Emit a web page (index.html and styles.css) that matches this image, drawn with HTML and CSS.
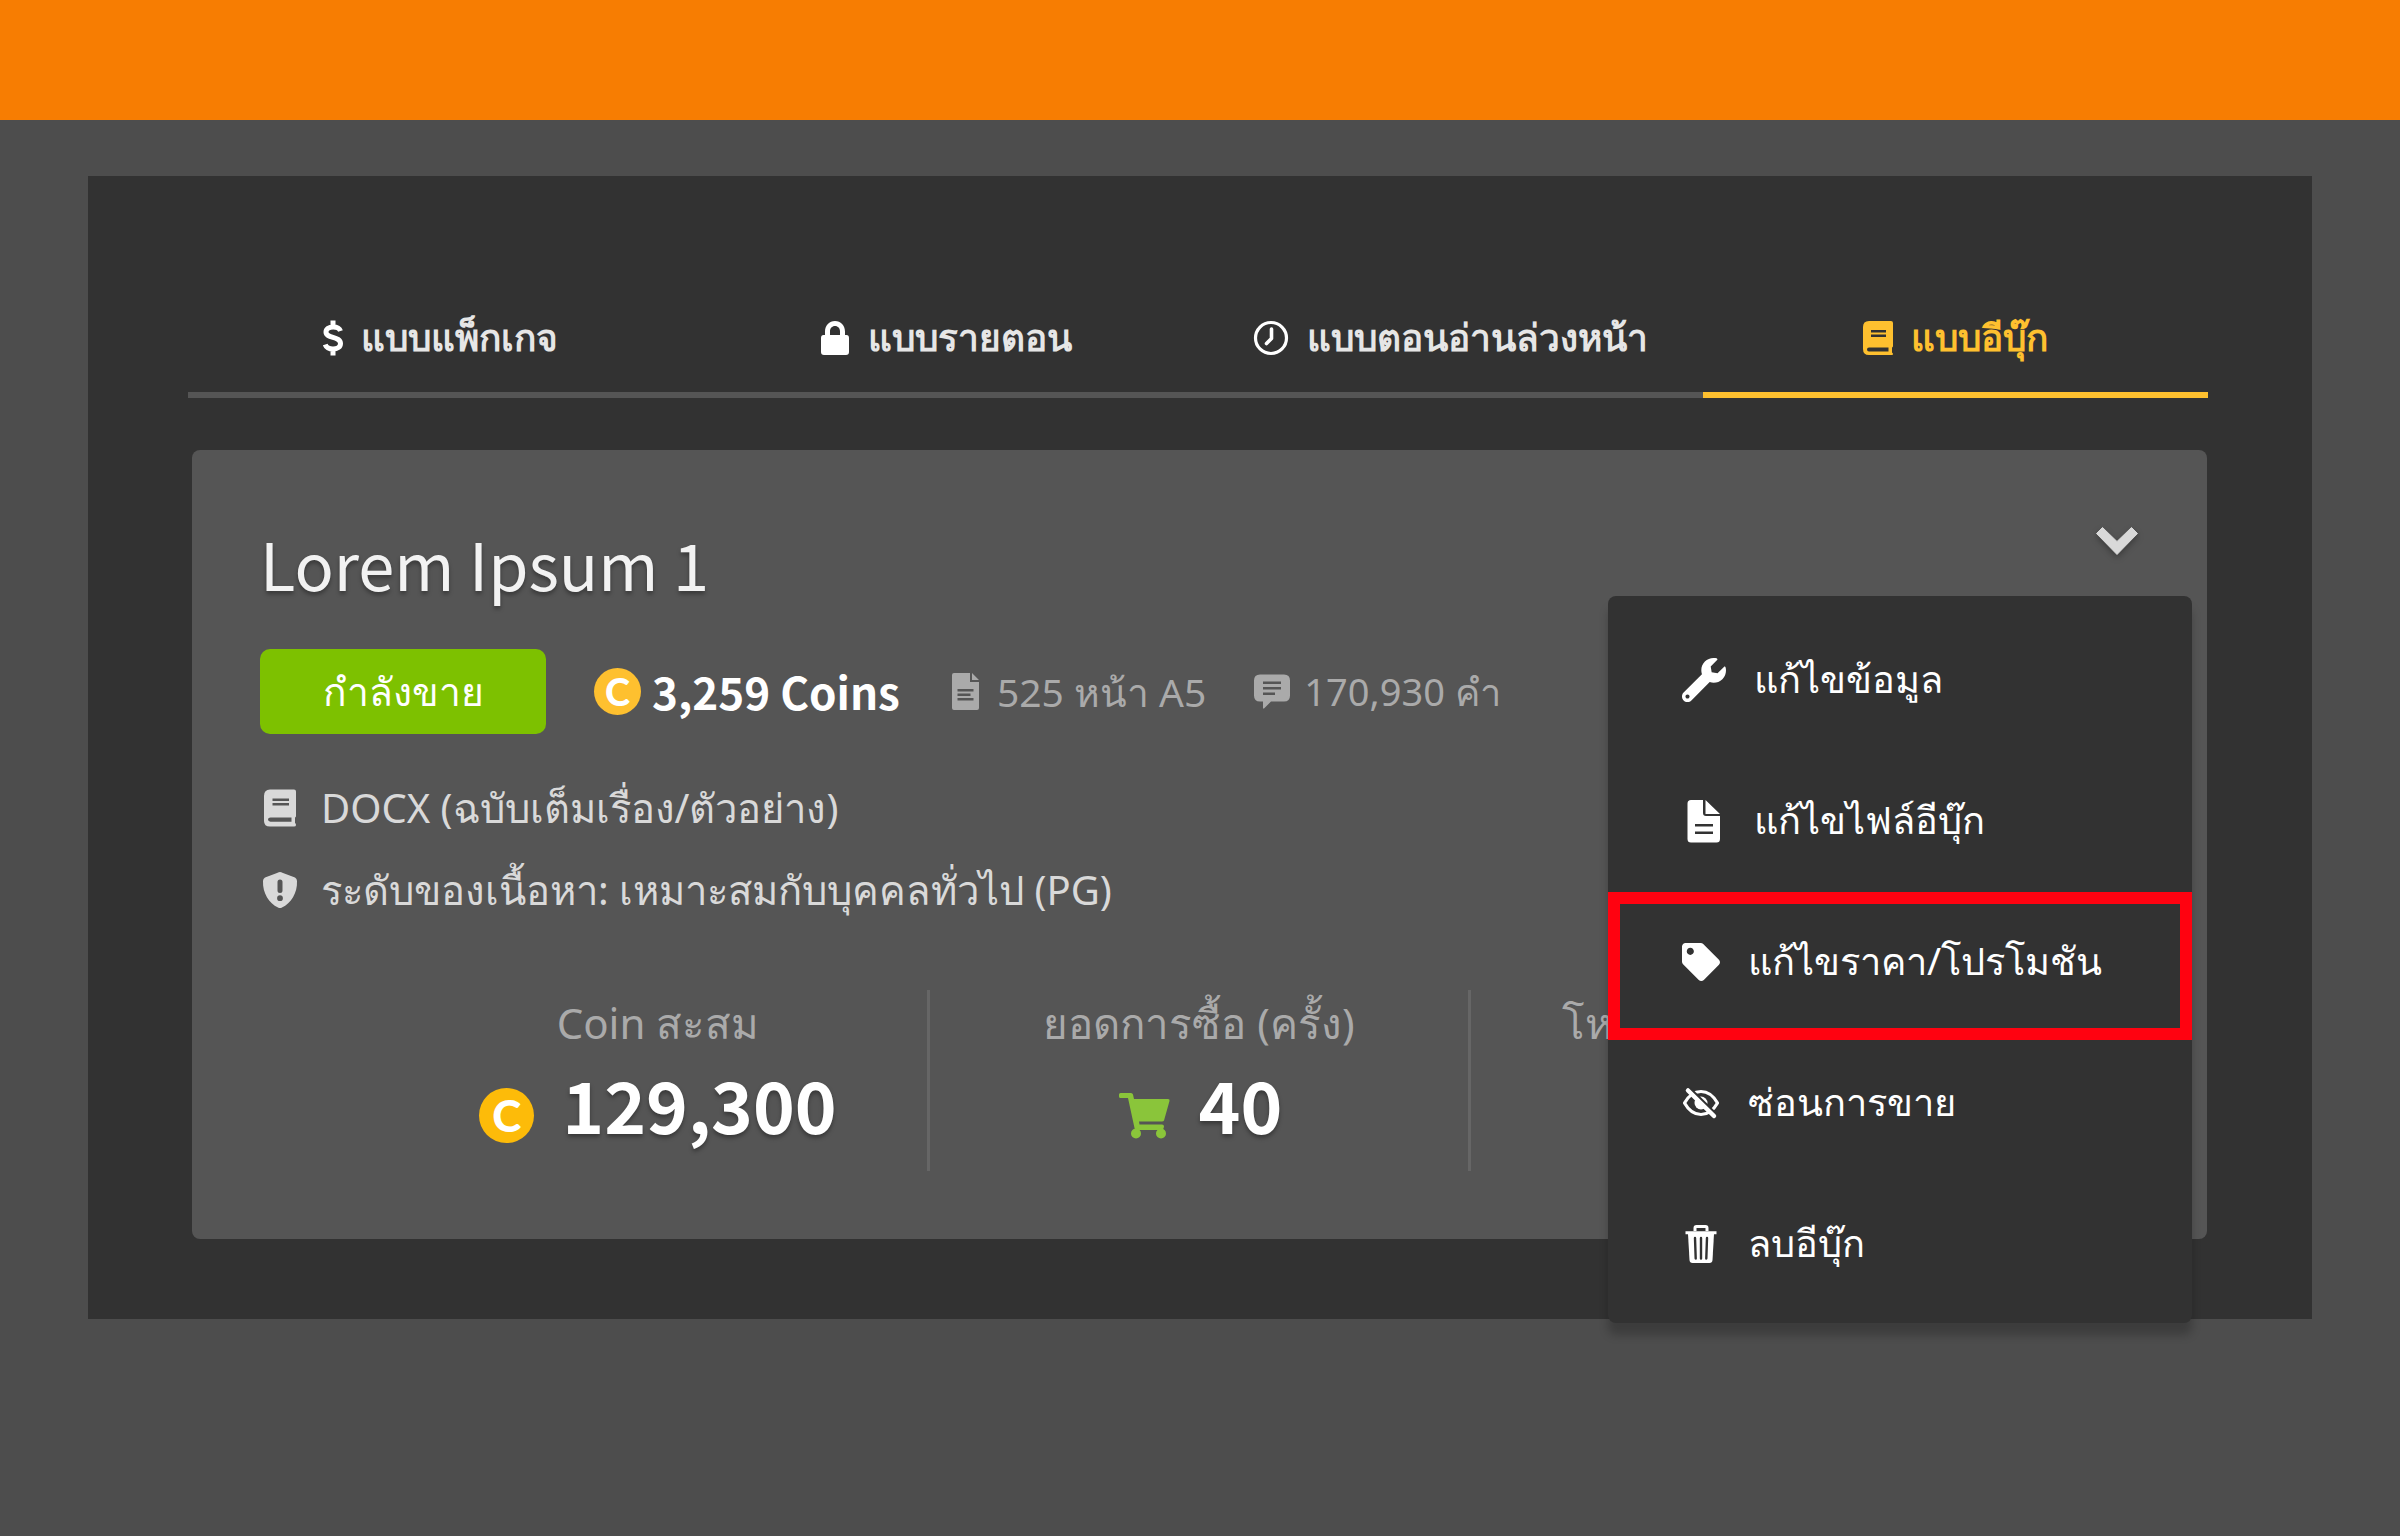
FILE: index.html
```html
<!DOCTYPE html>
<html lang="th">
<head>
<meta charset="utf-8">
<meta name="viewport" content="width=device-width, initial-scale=1">
<title>แบบอีบุ๊ก</title>
<link rel="stylesheet" href="styles.css">
</head>
<body>
<header class="topbar"></header>
<main class="panel">
  <nav class="tabs">
    <a class="tab" href="#package">
      <svg class="tab-icon tab-icon--slim" viewBox="0 0 20 36" aria-hidden="true"><path d="M17.500 11C16.500 8.200 13.800 7 10.200 7C5.800 7 3 8.800 3 12C3 18.800 17.500 15.800 17.500 23.500C17.500 27 14.400 29 10 29C6 29 3.200 27.500 2.200 24.500M10 0.500V7M10 29V35.500" fill="none" stroke="currentColor" stroke-width="5"/></svg>
      <span>แบบแพ็กเกจ</span>
    </a>
    <a class="tab" href="#chapter">
      <svg class="tab-icon tab-icon--mid" viewBox="0 0 30 36" aria-hidden="true"><path d="M5 15V11.500C5 5.500 9.300 1 15 1S25 5.500 25 11.500V15H26.500Q29 15 29 18V32Q29 35 26 35H4Q1 35 1 32V18Q1 15 3.500 15ZM10 15H20V11.500C20 8.300 18 6 15 6S10 8.300 10 11.500Z" fill="currentColor" fill-rule="evenodd"/></svg>
      <span>แบบรายตอน</span>
    </a>
    <a class="tab" href="#advance">
      <svg class="tab-icon" viewBox="0 0 36 36" aria-hidden="true"><g fill="none" stroke="currentColor" stroke-linecap="round"><circle cx="18" cy="18" r="15.500" stroke-width="3.200"/><path d="M18.500 9V18.500L13.500 23.500" stroke-width="3.600" stroke-linejoin="round"/></g></svg>
      <span>แบบตอนอ่านล่วงหน้า</span>
    </a>
    <a class="tab tab--active" href="#ebook" aria-current="page">
      <svg class="tab-icon tab-icon--mid" viewBox="0 0 30 36" aria-hidden="true"><path d="M6 1H28Q30 1 30 3V26Q30 27 29 27.500V32.500Q30 33 30 34Q30 35 29 35H6Q0 35 0 29V7Q0 1 6 1ZM8 10V12.500H23V10ZM8 14.500V17H23V14.500ZM6 27.500Q4 27.500 4 29.500T6 31.500H25.500V27.500Z" fill="currentColor" fill-rule="evenodd"/></svg>
      <span>แบบอีบุ๊ก</span>
    </a>
  </nav>

  <section class="card">
    <div class="card-head">
      <h1 class="title">Lorem Ipsum 1</h1>
      <button class="toggle" type="button" aria-label="เมนู" aria-expanded="true">
        <svg class="chevron" viewBox="0 0 42 28" aria-hidden="true"><path d="M6.500 0.500L21 14.500L35.500 0.500L41.500 6.500L21 27.500L0.500 6.500Z" fill="currentColor" stroke="currentColor" stroke-linejoin="round"/></svg>
      </button>
    </div>

    <div class="meta">
      <button class="status" type="button">กำลังขาย</button>
      <div class="price"><span class="coin">C</span><span>3,259 Coins</span></div>
      <div class="fact fact--pages">
        <svg class="fact-icon" viewBox="0 0 27 37" aria-hidden="true"><path d="M2 0H18V9H27V35Q27 37 25 37H2Q0 37 0 35V2Q0 0 2 0ZM20 0L27 7H20ZM5.500 16V18.500H21.500V16ZM5.500 20.500V23H18.500V20.500ZM5.500 25V27.500H21.500V25Z" fill="currentColor" fill-rule="evenodd"/></svg>
        <span>525 หน้า A5</span>
      </div>
      <div class="fact">
        <svg class="fact-icon fact-icon--wide" viewBox="0 0 36 36" aria-hidden="true"><path d="M6 1H30Q36 1 36 7V22Q36 28 30 28H17L10 35Q9 35.500 9 34V28H6Q0 28 0 22V7Q0 1 6 1ZM9 8V10.500H27V8ZM9 13.500V16H27V13.500ZM9 19V21.500H21V19Z" fill="currentColor" fill-rule="evenodd"/></svg>
        <span>170,930 คำ</span>
      </div>
    </div>

    <ul class="details">
      <li class="detail">
        <svg class="detail-icon" viewBox="0 0 36 38" aria-hidden="true"><path d="M8 0.500H32Q34 0.500 34 2.500V27Q34 28 33 28.500V34Q34 34.500 34 36Q34 37.500 32 37.500H8Q2 37.500 2 32V7Q2 0.500 8 0.500ZM10.500 9.500V12H27V9.500ZM10.500 14V16.500H27V14ZM8.500 28.500Q6 28.500 6 30.500T8.500 32.800H29.500V28.500Z" fill="currentColor" fill-rule="evenodd"/></svg>
        <span>DOCX (ฉบับเต็มเรื่อง/ตัวอย่าง)</span>
      </li>
      <li class="detail">
        <svg class="detail-icon" viewBox="0 0 36 38" aria-hidden="true"><path d="M18 1Q19 1 21 2L33 6.500Q35 7.500 35 10C35.500 22 29 32.500 20 36.500Q18 37.500 16 36.500C7 32.500 0.500 22 1 10Q1 7.500 3 6.500L15 2Q17 1 18 1ZM18 8.500Q15.500 8.500 15.500 11V19.500Q15.500 22 18 22T20.500 19.500V11Q20.500 8.500 18 8.500ZM18 24.300A2.900 2.900 0 1 0 18 30.100A2.900 2.900 0 1 0 18 24.300Z" fill="currentColor" fill-rule="evenodd"/></svg>
        <span>ระดับของเนื้อหา: เหมาะสมกับบุคคลทั่วไป (PG)</span>
      </li>
    </ul>

    <div class="stats">
      <div class="stat">
        <div class="stat-label">Coin สะสม</div>
        <div class="stat-value"><span class="coin coin--large">C</span><span>129,300</span></div>
      </div>
      <div class="stat">
        <div class="stat-label">ยอดการซื้อ (ครั้ง)</div>
        <div class="stat-value">
          <svg class="cart" viewBox="0 0 55 55" aria-hidden="true"><path d="M4.500 5H15Q16.500 5 17 6.500L18 11H52Q54 11 53.500 13L48 32.500Q47.500 33.500 46 33.500H23L23.500 36.500H46Q48 36.500 48 38.500T46 42H21Q19 42 18.500 40L12 10H4.500Q3 10 3 8.500V6.500Q3 5 4.500 5Z" fill="currentColor"/><circle cx="20" cy="45.500" r="5" fill="currentColor"/><circle cx="45" cy="45.500" r="5" fill="currentColor"/></svg>
          <span>40</span>
        </div>
      </div>
      <div class="stat">
        <div class="stat-label">โหลดตัวอย่าง (ครั้ง)</div>
      </div>
    </div>

    <div class="menu">
      <button class="menu-item" type="button">
        <svg class="menu-icon menu-icon--large" viewBox="0 0 512 512" aria-hidden="true"><path d="M507.700 109.100c-2.200-9-13.500-12.100-20.100-5.500l-74.400 74.400-67.900-11.300-11.300-67.900 74.400-74.400c6.600-6.600 3.400-17.900-5.700-20.200-47.400-11.700-99.600 .9-136.600 37.900-39.600 39.600-50.500 97.100-34.100 147.200L18.700 402.800c-25 25-25 65.500 0 90.500 25 25 65.500 25 90.500 0l213.200-213.200c50.100 16.700 107.500 5.700 147.400-34.200 37.100-37.100 49.700-89.300 37.900-136.700zM64 472c-13.200 0-24-10.700-24-24 0-13.300 10.700-24 24-24s24 10.700 24 24c0 13.300-10.700 24-24 24z" fill="currentColor"/></svg>
        <span>แก้ไขข้อมูล</span>
      </button>
      <button class="menu-item" type="button">
        <svg class="menu-icon menu-icon--large" viewBox="0 0 44 44" aria-hidden="true"><path d="M9 1H21V14Q21 17 24 17H38V40Q38 43.500 34.500 43.500H9Q5.500 43.500 5.500 40V4.500Q5.500 1 9 1ZM23.500 1L38 15H23.500ZM13 25V27.500H31V25ZM13 32.500V35H31V32.500Z" fill="currentColor" fill-rule="evenodd"/></svg>
        <span>แก้ไขไฟล์อีบุ๊ก</span>
      </button>
      <button class="menu-item menu-item--marked" type="button">
        <svg class="menu-icon" viewBox="0 0 512 512" aria-hidden="true"><path d="M0 252.100V48C0 21.500 21.500 0 48 0h204.100a48 48 0 0 1 33.900 14.100l211.900 211.900c18.700 18.700 18.700 49.100 0 67.900L293.800 497.900c-18.700 18.700-49.100 18.700-67.900 0L14.100 286.100A48 48 0 0 1 0 252.100zM112 64c-26.500 0-48 21.500-48 48s21.500 48 48 48 48-21.500 48-48-21.500-48-48-48z" fill="currentColor"/></svg>
        <span>แก้ไขราคา/โปรโมชัน</span>
      </button>
      <button class="menu-item" type="button">
        <svg class="menu-icon" viewBox="0 0 38 38" aria-hidden="true"><path d="M2.500 19Q9 7.500 19 7.500T35.500 19Q29 30.500 19 30.500T2.500 19Z" fill="none" stroke="currentColor" stroke-width="3.200" stroke-linejoin="round"/><circle cx="19" cy="19" r="6.500" fill="currentColor"/><path d="M8 4.500L35 31" stroke="#323232" stroke-width="2.500"/><path d="M6 6.500L32 32" stroke="currentColor" stroke-width="4.500" stroke-linecap="round"/></svg>
        <span>ซ่อนการขาย</span>
      </button>
      <button class="menu-item" type="button">
        <svg class="menu-icon" viewBox="0 0 38 38" aria-hidden="true"><path d="M13 6V3Q13 1.500 14.500 1.500H23.500Q25 1.500 25 3V6M3.500 7.800H34.500" fill="none" stroke="currentColor" stroke-width="3"/><path d="M6 9H32L30.500 35Q30.300 38 27.500 38H10.500Q7.700 38 7.500 35Z" fill="currentColor"/><path d="M13 13L13.700 33.500M19 13V33.500M25 13L24.300 33.500" stroke="#323232" stroke-width="2.400" stroke-linecap="round"/></svg>
        <span>ลบอีบุ๊ก</span>
      </button>
    </div>
  </section>
</main>
</body>
</html>
```
FILE: styles.css
```css
* {
  box-sizing: border-box;
}

body {
  margin: 0;
  min-height: 100vh;
  background: #4d4d4d;
  color: #fff;
  font-family: "Noto Sans", sans-serif;
  font-size: 38px;
}

button {
  border: 0;
  padding: 0;
  background: none;
  color: inherit;
  font: inherit;
  cursor: pointer;
}

svg {
  display: block;
  flex: none;
}

.topbar {
  height: 120px;
  background: #f77d02;
}

.panel {
  margin: 56px 88px;
  padding: 108px 104px 80px 100px;
  background: #323232;
}

/* Tabs */
.tabs {
  display: grid;
  grid-template-columns: repeat(4, 1fr);
}

.tab {
  display: flex;
  align-items: center;
  justify-content: center;
  gap: 18px;
  height: 114px;
  border-bottom: 6px solid #555;
  color: #fff;
  font-size: 37px;
  font-weight: 700;
  line-height: 48px;
  text-decoration: none;
}

.tab span {
  padding-bottom: 2px;
  color: #e6e6e6;
}

.tab--active,
.tab--active span {
  border-color: #fec02f;
  color: #fec02f;
}

.tab-icon {
  width: 36px;
  height: 36px;
}

.tab-icon--mid {
  width: 30px;
}

.tab-icon--slim {
  width: 20px;
}

/* Card */
.card {
  position: relative;
  margin: 52px 1px 0 4px;
  padding: 73px 67px 68px 68px;
  border-radius: 8px;
  background: #555;
}

.card-head {
  display: flex;
  justify-content: space-between;
  align-items: flex-start;
}

.title {
  margin: 0;
  color: #f2f2f2;
  font-family: "Noto Sans CJK SC", "Noto Sans", sans-serif;
  font-size: 65px;
  font-weight: 400;
  line-height: 80px;
  text-shadow: 0 3px 4px rgba(0, 0, 0, .35);
}

.toggle {
  padding: 4px 2px;
  color: #d9d9d9;
}

.chevron {
  width: 42px;
  height: 28px;
  filter: drop-shadow(0 3px 3px rgba(0, 0, 0, .3));
}

.meta {
  display: flex;
  align-items: center;
  margin-top: 46px;
  font-size: 39px;
}

.status {
  width: 286px;
  height: 85px;
  border-radius: 10px;
  background: #7dc100;
}

.price {
  display: flex;
  align-items: center;
  gap: 11px;
  margin-left: 48px;
  font-family: "Noto Sans CJK SC", "Noto Sans", sans-serif;
  font-size: 44px;
  font-weight: 700;
  line-height: 64px;
}

.price span:last-child {
  padding-bottom: 2px;
}

.coin {
  display: flex;
  align-items: center;
  justify-content: center;
  flex: none;
  width: 47px;
  height: 47px;
  border-radius: 50%;
  background: #fec02f;
  color: #fff;
  font-family: Lato, sans-serif;
  font-size: 38px;
  font-weight: 900;
  line-height: 47px;
}

.coin--large {
  width: 55px;
  height: 55px;
  background: #fdbb09;
  font-size: 44px;
  line-height: 55px;
  text-shadow: none;
}

.fact {
  display: flex;
  align-items: center;
  gap: 14px;
  margin-left: 48px;
  color: #aaa;
  font-size: 38px;
}

.fact--pages {
  gap: 18px;
  margin-left: 52px;
  font-size: 39px;
}

.fact span {
  padding-top: 2px;
}

.fact-icon {
  width: 27px;
  height: 37px;
}

.fact-icon--wide {
  width: 36px;
}

.details {
  margin: 33px 0 0;
  padding: 0;
  list-style: none;
  color: #d9d9d9;
  font-size: 40px;
}

.detail {
  display: flex;
  align-items: center;
  gap: 23px;
  padding-left: 2px;
  line-height: 82px;
}

.detail-icon {
  width: 36px;
  height: 38px;
}

.stats {
  display: grid;
  grid-template-columns: repeat(3, 1fr);
  margin: 59px 128px 0 129px;
}

.stat {
  height: 181px;
  padding-top: 5px;
  border-right: 3px solid #666;
  text-align: center;
}

.stat:last-child {
  border-right: 0;
}

.stat-label {
  color: #aaa;
  font-size: 42px;
  line-height: 56px;
}

.stat-value {
  display: flex;
  align-items: flex-end;
  justify-content: center;
  gap: 28px;
  margin-top: 12px;
  font-family: "Noto Sans CJK SC", "Noto Sans", sans-serif;
  font-size: 71px;
  font-weight: 700;
  line-height: 80px;
  text-shadow: 0 3px 4px rgba(0, 0, 0, .35);
}

.cart {
  width: 55px;
  height: 55px;
  color: #8ac53a;
}

/* Dropdown menu */
.menu {
  position: absolute;
  top: 146px;
  right: 15px;
  width: 584px;
  padding: 13px 0 9px;
  border-radius: 8px;
  background: #323232;
  box-shadow: 0 12px 10px rgba(0, 0, 0, .22);
}

.menu-item {
  position: relative;
  display: flex;
  align-items: center;
  gap: 28px;
  width: 100%;
  height: 141px;
  padding-left: 74px;
  font-size: 38px;
  text-align: left;
}

.menu-item--marked::after {
  content: "";
  position: absolute;
  inset: 1px 0 -8px;
  border: 12px solid #ff0210;
}

.menu-icon {
  width: 38px;
  height: 38px;
}

.menu-icon--large {
  width: 44px;
  height: 44px;
}
```
